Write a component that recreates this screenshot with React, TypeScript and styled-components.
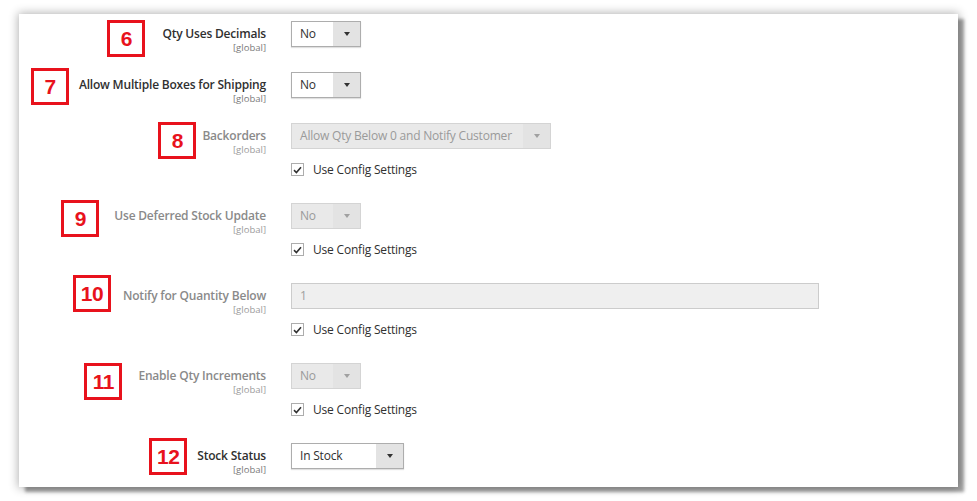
import React from "react";
import styled, { createGlobalStyle } from "styled-components";

const GlobalStyle = createGlobalStyle`
  html, body {
    margin: 0;
    background: #ffffff;
  }
  body {
    font-family: "Open Sans", "Noto Sans", sans-serif;
    color: #303030;
  }
`;

const Page = styled.div`
  padding: 14px 19px;
`;

const Panel = styled.div`
  background: #ffffff;
  padding: 7px 0 18px;
  display: flex;
  flex-direction: column;
  gap: 25px;
  box-shadow: 6px 5px 3px rgba(0, 0, 0, 0.36), 0 0 9px 1px rgba(0, 0, 0, 0.3);
`;

const Field = styled.div`
  display: grid;
  grid-template-columns: 247px 1fr;
  column-gap: 25px;
  align-items: start;
`;

const LabelCell = styled.div`
  height: 26px;
  text-align: right;
`;

const LabelText = styled.span<{ disabled?: boolean }>`
  position: relative;
  display: inline-block;
  padding-top: 5px;
  font-size: 12px;
  font-weight: 600;
  letter-spacing: -0.2px;
  line-height: 16px;
  color: ${(p) => (p.disabled ? "#8a8a8a" : "#303030")};
`;

const Scope = styled.div<{ disabled?: boolean }>`
  font-size: 9.5px;
  line-height: 9px;
  color: ${(p) => (p.disabled ? "#9c9c9c" : "#7a7a7a")};
`;

const Badge = styled.span<{ gap: number; dy: number }>`
  position: absolute;
  right: calc(100% + ${(p) => p.gap}px);
  top: ${(p) => p.dy}px;
  box-sizing: border-box;
  width: 38px;
  height: 37px;
  border: 3px solid #e8121c;
  display: flex;
  align-items: center;
  justify-content: center;
  font-family: "Liberation Sans", Arial, sans-serif;
  font-weight: 700;
  font-size: 21px;
  letter-spacing: -0.5px;
  color: #e8121c;
  background: #ffffff;
`;

const Control = styled.div`
  display: flex;
  flex-direction: column;
  align-items: flex-start;
`;

const Select = styled.div<{ width: number; disabled?: boolean }>`
  box-sizing: border-box;
  width: ${(p) => p.width}px;
  height: 26px;
  display: flex;
  border: 1px solid ${(p) => (p.disabled ? "#d4d4d4" : "#adadad")};
  background: ${(p) => (p.disabled ? "#e9e9e9" : "#ffffff")};
  box-shadow: ${(p) => (p.disabled ? "none" : "0 1px 1px rgba(0,0,0,0.12)")};
`;

const SelectValue = styled.div<{ disabled?: boolean }>`
  flex: 1;
  padding-left: 8px;
  font-size: 12px;
  letter-spacing: -0.2px;
  line-height: 24px;
  color: ${(p) => (p.disabled ? "#9a9a9a" : "#303030")};
  white-space: nowrap;
  overflow: hidden;
`;

const SelectArrow = styled.div<{ disabled?: boolean }>`
  width: 27px;
  display: flex;
  align-items: center;
  justify-content: center;
  background: #e3e3e3;
  &::after {
    content: "";
    border-left: 3px solid transparent;
    border-right: 3px solid transparent;
    border-top: 4px solid ${(p) => (p.disabled ? "#a0a0a0" : "#333333")};
  }
`;

const TextInput = styled.div<{ width: number }>`
  box-sizing: border-box;
  width: ${(p) => p.width}px;
  height: 26px;
  border: 1px solid #cccccc;
  background: #efefef;
  padding-left: 8px;
  font-size: 12px;
  line-height: 24px;
  color: #a0a0a0;
`;

const CheckRow = styled.label`
  display: flex;
  align-items: center;
  gap: 9px;
  height: 15px;
  margin-top: 13px;
  margin-bottom: 1px;
  font-size: 12px;
  letter-spacing: -0.2px;
  color: #303030;
`;

const CheckBox = styled.span`
  box-sizing: border-box;
  width: 13px;
  height: 13px;
  border: 1px solid #adadad;
  background: #ffffff;
  display: flex;
  align-items: center;
  justify-content: center;
`;

const Check = () => (
  <CheckBox>
    <svg width="9" height="8" viewBox="0 0 9 8">
      <path d="M1 4.2 L3.4 6.5 L8 1.2" fill="none" stroke="#303030" strokeWidth="1.6" />
    </svg>
  </CheckBox>
);

const UseConfig = () => (
  <CheckRow>
    <Check />
    Use Config Settings
  </CheckRow>
);

type Mark = { n: number; gap: number; dy: number };

const Label = ({ text, mark, disabled }: { text: string; mark: Mark; disabled?: boolean }) => (
  <LabelCell>
    <LabelText disabled={disabled}>
      <Badge gap={mark.gap} dy={mark.dy}>
        {mark.n}
      </Badge>
      {text}
    </LabelText>
    <Scope disabled={disabled}>[global]</Scope>
  </LabelCell>
);

const Dropdown = ({ value, width, disabled }: { value: string; width: number; disabled?: boolean }) => (
  <Select width={width} disabled={disabled}>
    <SelectValue disabled={disabled}>{value}</SelectValue>
    <SelectArrow disabled={disabled} />
  </Select>
);

export default function App() {
  return (
    <>
      <GlobalStyle />
      <Page>
        <Panel>
          <Field>
            <Label text="Qty Uses Decimals" mark={{ n: 6, gap: 17, dy: -1 }} />
            <Control>
              <Dropdown value="No" width={70} />
            </Control>
          </Field>
          <Field>
            <Label text="Allow Multiple Boxes for Shipping" mark={{ n: 7, gap: 10, dy: -4 }} />
            <Control>
              <Dropdown value="No" width={70} />
            </Control>
          </Field>
          <Field>
            <Label text="Backorders" disabled mark={{ n: 8, gap: 6, dy: -1 }} />
            <Control>
              <Dropdown value="Allow Qty Below 0 and Notify Customer" width={260} disabled />
              <UseConfig />
            </Control>
          </Field>
          <Field>
            <Label text="Use Deferred Stock Update" disabled mark={{ n: 9, gap: 15, dy: -3 }} />
            <Control>
              <Dropdown value="No" width={70} disabled />
              <UseConfig />
            </Control>
          </Field>
          <Field>
            <Label text="Notify for Quantity Below" disabled mark={{ n: 10, gap: 12, dy: -8 }} />
            <Control>
              <TextInput width={528}>1</TextInput>
              <UseConfig />
            </Control>
          </Field>
          <Field>
            <Label text="Enable Qty Increments" disabled mark={{ n: 11, gap: 16, dy: 0 }} />
            <Control>
              <Dropdown value="No" width={70} disabled />
              <UseConfig />
            </Control>
          </Field>
          <Field>
            <Label text="Stock Status" mark={{ n: 12, gap: 10, dy: -5 }} />
            <Control>
              <Dropdown value="In Stock" width={113} />
            </Control>
          </Field>
        </Panel>
      </Page>
    </>
  );
}
